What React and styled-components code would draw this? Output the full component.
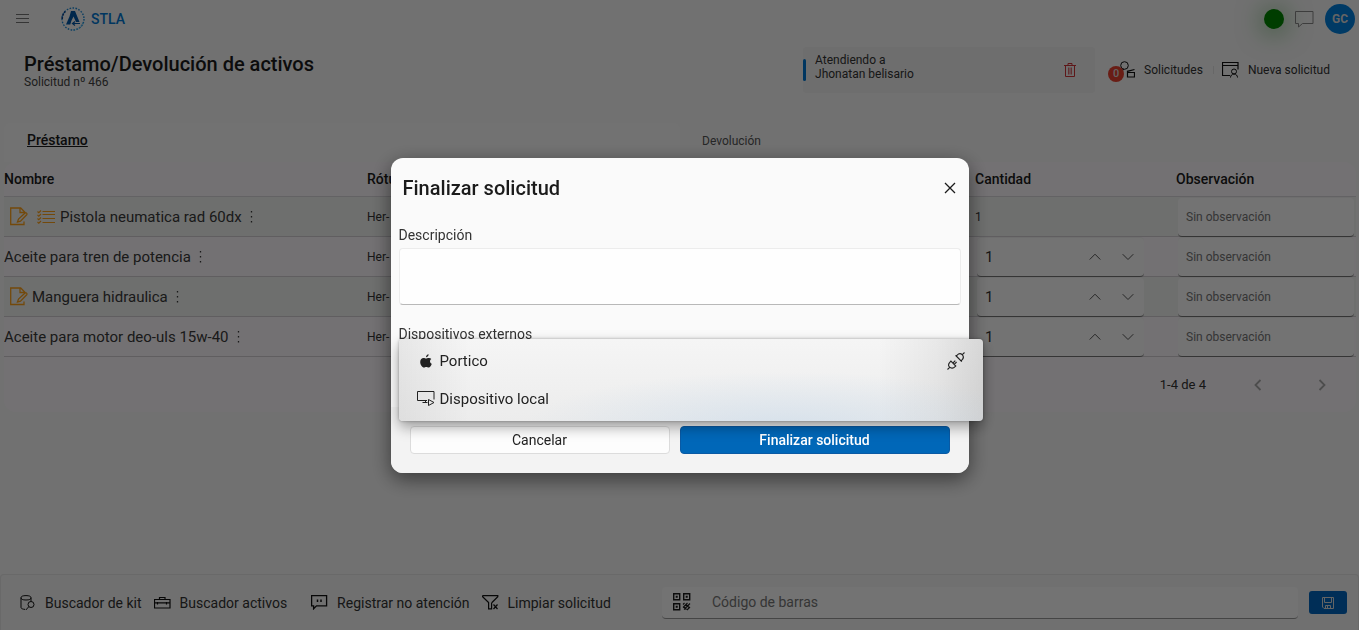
import { useState } from "react";
import styled, { createGlobalStyle } from "styled-components";

const GlobalStyle = createGlobalStyle`
  *, *::before, *::after {
    box-sizing: border-box;
  }
  body {
    margin: 0;
    background: #fafafa;
    color: #1b1b1b;
    font-family: Roboto, "Liberation Sans", sans-serif;
    font-size: 12px;
  }
  button, input, textarea {
    font-family: inherit;
    color: inherit;
  }
  button {
    border: 0;
    padding: 0;
    background: none;
    cursor: pointer;
  }
`;

/* ---------- icons ---------- */

const Svg = styled.svg.attrs({ "aria-hidden": true })`
  display: block;
  flex: none;
  fill: none;
  stroke: currentColor;
  stroke-width: ${(p) => p.$stroke || 1};
`;

const MenuIcon = () => (
  <Svg width="14" height="10" viewBox="0 0 14 10">
    <path d="M0 .5h13M0 4.500h13M0 8.500h13" />
  </Svg>
);

const Logo = () => (
  <Svg width="24" height="26" viewBox="0 0 24 26">
    <circle cx="12" cy="13" r="11" stroke="#1c8ad6" strokeWidth="1.4" strokeDasharray="1.6 1.4" />
    <path d="M12.4 24a11 11 0 0 0 10-8" stroke="#5ac0f5" strokeWidth="1.4" strokeDasharray="1.4 1.4" />
    <path d="M1.2 13a11 11 0 0 1 3-7.5" stroke="#0b3f8a" strokeWidth="1.6" strokeDasharray="2 1.2" />
    <path d="M5 18.500 8.500 10.500 10 5h4L18.500 16h-3.500l-2.500-5.500-2.200 4.500-1 3.500z" fill="#0058a8" stroke="none" />
    <path d="M12 17.500h7M14 15.500l-2.500 2 2.500 2" stroke="#0058a8" strokeWidth="1.200" />
  </Svg>
);

const ChatIcon = () => (
  <Svg width="19" height="17" viewBox="0 0 19 17">
    <path d="M.5 .5h17.500v12H7.500L3.500 16v-3.500h-3z" />
  </Svg>
);

const TrashIcon = () => (
  <Svg width="12" height="15" viewBox="0 0 12 15">
    <path d="M0 2.500h12M4 2.500v-2h4v2M1.500 2.500v11h9v-11" />
    <path d="M4.500 4.500v7M6 4.500v7M7.500 4.500v7" strokeWidth="0.700" />
  </Svg>
);

const RequestsIcon = () => (
  <Svg width="17" height="18" viewBox="0 0 17 18">
    <circle cx="6.500" cy="4.500" r="3.800" />
    <path d="M1 14c0-3 2-5 5-5.500M9.500 11.500h7v4.500h-7zM9.500 11.500v-1.200l7-1.800" strokeWidth="1.200" />
  </Svg>
);

const NewRequestIcon = () => (
  <Svg width="17" height="16" viewBox="0 0 17 16">
    <path d="M8 13.500H.5V.5h15.500v7M.5 3.500h15.500" strokeWidth="1.200" />
    <circle cx="12" cy="9.500" r="2.500" />
    <path d="M8.500 15.500c0-2 1.500-3.500 3.500-3.500s3.500 1.500 3.500 3.500" />
  </Svg>
);

const NoteEditIcon = () => (
  <Svg width="18" height="19" viewBox="0 0 18 19" $stroke="1.300">
    <path d="M14 14.500V17.500H.7V1h10l4 4v1.500M10 1v4.500h4.500" />
    <path d="M7.500 15l1-3 6.500-6c1-.8 2.600.6 1.700 1.700L10.500 14.200z" />
  </Svg>
);

const ChecklistIcon = () => (
  <Svg width="19" height="14" viewBox="0 0 19 14" $stroke="1.100">
    <path d="M5.500 1.500H18M5.500 4.500H18M5.500 8.500H18M5.500 12.500H18" />
    <path d="M.5 1.500l1.300 1.200L4 .5M.5 5l1.300 1.200L4 4M.5 8.500l1.300 1.200L4 7.500M.5 12l1.300 1.200L4 11" />
  </Svg>
);

const MoreIcon = () => (
  <Svg width="3" height="14" viewBox="0 0 3 14">
    <path d="M1.500 1v1.500M1.500 6v1.500M1.500 11v1.500" strokeWidth="1.300" />
  </Svg>
);

const Chevron = ({ dir }) => (
  <Svg width="12" height="8" viewBox="0 0 12 8">
    <path d={dir === "up" ? "M.7 6.500 6 1.200l5.300 5.300" : "M.7 1.200 6 6.500l5.300-5.300"} />
  </Svg>
);

const PageArrow = ({ dir }) => (
  <Svg width="8" height="12" viewBox="0 0 8 12" $stroke="1.800">
    <path d={dir === "left" ? "M6.500 1 1.500 6l5 5" : "M1.500 1l5 5-5 5"} />
  </Svg>
);

const CloseIcon = () => (
  <Svg width="12" height="12" viewBox="0 0 12 12" $stroke="1.300">
    <path d="M1 1l10 10M11 1 1 11" />
  </Svg>
);

const AppleIcon = () => (
  <Svg width="12" height="14" viewBox="0 0 12 14">
    <path
      d="M8.600.3c.1 1.600-1.200 3-2.600 3C5.900 1.800 7.200.5 8.600.3zM11.300 4.900c-1.800 1-1.700 3.900.5 4.800-.5 1.500-1.700 3.900-3.200 3.900-.9 0-1.300-.5-2.300-.5s-1.500.5-2.300.5C2.300 13.600.2 10.800.2 8c0-2.700 1.700-4.100 3.300-4.100 1 0 1.900.7 2.600.7.600 0 1.600-.8 2.900-.7 1 .1 1.800.4 2.300 1z"
      fill="currentColor"
      stroke="none"
    />
  </Svg>
);

const MonitorPlayIcon = () => (
  <Svg width="18" height="17" viewBox="0 0 18 17">
    <path d="M10 10.500H.5v-9h16.500v8M5.500 12.500h5M8.500 10.500v2" />
    <path d="M11.500 9.500v6l5.500-3z" />
  </Svg>
);

const PlugIcon = () => (
  <Svg width="18" height="18" viewBox="0 0 18 18" $stroke="1.100">
    <path d="M.5 17.500l2.200-2.200M3.200 9.800c-1.800 1.800-2 4-.6 5.400s3.700 1.300 5.500-.5l.7-.7-4.900-4.900zM6 11l2.300-2.300M7.200 12.300 9.600 10" />
    <path d="M17.500.5l-2.200 2.200M9.200 4l4.900 4.900.7-.7c1.800-1.800 1.900-4 .5-5.400s-3.600-1.300-5.400.5zM8.500 3.300l.7.700M14.100 8.900l.7.700" />
  </Svg>
);

const DatabaseSearchIcon = () => (
  <Svg width="16" height="16" viewBox="0 0 16 16">
    <ellipse cx="6" cy="2.800" rx="5" ry="2.200" />
    <path d="M1 2.800v9.700c0 1 2 1.800 4 1.900M11 2.800v3.700" />
    <circle cx="11" cy="9.500" r="3" />
    <path d="M8.800 11.700 5.800 15" />
  </Svg>
);

const ToolboxIcon = () => (
  <Svg width="17" height="12" viewBox="0 0 17 12">
    <path d="M.5 2.500h15.500v8.500H.5zM5.500 2.500v-2h5.500v2M.5 5.800h15.500M3.500 5v2.500M12.500 5v2.500" strokeWidth="1.200" />
  </Svg>
);

const MessageIcon = () => (
  <Svg width="17" height="15" viewBox="0 0 17 15">
    <path d="M.6 .6h15v10.300H5.500L2.600 13.800v-2.900h-2z" strokeWidth="1.300" />
    <path d="M6.500 4.500v2.500M10 4.500v2.500" strokeWidth="1.500" />
  </Svg>
);

const FilterClearIcon = () => (
  <Svg width="17" height="15" viewBox="0 0 17 15">
    <path d="M.6.600h15.200v1.200L10 7.500M.6.600v1.200l6 5.700v6.300h3V7.500" strokeWidth="1.200" />
    <path d="M11.500 9.500l4 4.500M15.500 9.500l-4 4.500" strokeWidth="1.200" />
  </Svg>
);

const QrIcon = () => (
  <Svg width="18" height="18" viewBox="0 0 18 18">
    <path d="M.700.700h6v6H.7zM10.700.700h6v6h-6zM.7 10.700h6v6H.7z" strokeWidth="1.400" />
    <path d="M2.700 3.700h2M12.700 3.700h2M2.700 13.700h2" strokeWidth="2" />
    <path d="M10 11.500l1.500-1.500M10 14.500l4.500-4.500M11 16.500l6-6M14 17l3-3M12.500 11l4 4M10.500 13.500l3 3" strokeWidth="1.100" />
  </Svg>
);

const SaveIcon = () => (
  <Svg width="12" height="12" viewBox="0 0 12 12">
    <path d="M.5.500h11v11H2L.5 10zM2.500.500v5h7v-5M3.500 11.500v-3h5v3M5.500 9v2" />
  </Svg>
);

/* ---------- page ---------- */

const Page = styled.div`
  display: flex;
  flex-direction: column;
  min-height: 100vh;
`;

const TopBar = styled.header`
  display: flex;
  align-items: center;
  height: 38px;
  padding: 0 4px 0 16px;
`;

const MenuButton = styled.button`
  color: #777;
`;

const Brand = styled.a`
  display: flex;
  align-items: center;
  gap: 6px;
  margin-left: 31px;
  color: #0078d4;
  font-size: 14px;
  font-weight: 500;
  text-decoration: none;
`;

const TopActions = styled.div`
  display: flex;
  align-items: center;
  gap: 11px;
  margin-left: auto;
  color: #888;
`;

const StatusDot = styled.span`
  width: 20px;
  height: 20px;
  border-radius: 50%;
  background: #008800;
  box-shadow: 0 2px 26px 2px rgba(0, 128, 0, 0.5);
`;

const Avatar = styled.button`
  width: 30px;
  height: 30px;
  border-radius: 50%;
  background: #0080e0;
  color: #ddd;
  font-size: 12px;
  font-weight: 700;
`;

const TitleRow = styled.section`
  display: flex;
  align-items: flex-start;
  padding: 9px 29px 30px 24px;
`;

const PageTitle = styled.h1`
  margin: 4px 0 0;
  font-size: 20px;
  line-height: 26px;
  font-weight: 500;
`;

const Subtitle = styled.p`
  margin: 0;
  font-size: 12px;
  line-height: 10px;
  color: #444;
`;

const TitleActions = styled.div`
  display: flex;
  align-items: center;
  margin-left: auto;
`;

const AttendingCard = styled.div`
  display: flex;
  align-items: center;
  width: 292px;
  height: 46px;
  margin-right: 13px;
  padding-right: 19px;
  border-radius: 4px;
  background: #f3f3f3;
  line-height: 14px;
  color: #333;

  &::before {
    content: "";
    width: 3px;
    height: 22px;
    margin-right: 9px;
    border-radius: 2px;
    background: #0078d4;
  }
`;

const AttendingName = styled.div`
  flex: 1;
  padding-bottom: 6px;
`;

const DeleteButton = styled.button`
  color: #d13438;
`;

const LinkButton = styled.button`
  display: flex;
  align-items: center;
  gap: 9px;
  font-size: 12px;
  color: #333;

  svg {
    color: #111;
  }
`;

const RequestsIconBox = styled.span`
  position: relative;
  padding-left: 10px;
`;

const Badge = styled.span`
  position: absolute;
  left: 0;
  bottom: -3px;
  width: 16px;
  height: 16px;
  border-radius: 50%;
  background: #e8412f;
  color: #ddd;
  font-size: 11px;
  font-weight: 500;
  line-height: 16px;
  text-align: center;
`;

const Separator = styled.span`
  width: 1px;
  height: 8px;
  margin: 0 8px 0 10px;
  background: #e4e4e4;
`;

const Tabs = styled.div`
  display: grid;
  grid-template-columns: 1fr 1fr;
  margin: 0 3px 0 4px;
`;

const Tab = styled.button`
  height: 39px;
  padding: ${(p) => (p.$active ? "0 23px 6px" : "0 22px 3px")};
  border-radius: 6px 6px 0 0;
  background: ${(p) => (p.$active ? "#fcfcfc" : "transparent")};
  color: ${(p) => (p.$active ? "#1b1b1b" : "#555")};
  font-size: ${(p) => (p.$active ? "14px" : "12px")};
  font-weight: ${(p) => (p.$active ? 500 : 400)};
  text-align: left;
  text-decoration: ${(p) => (p.$active ? "underline" : "none")};
`;

const TablePanel = styled.section`
  margin: 0 3px 0 4px;
  border-radius: 12px;
  background: #fffbff;
  overflow: hidden;
`;

const Table = styled.table`
  width: 100%;
  table-layout: fixed;
  border-collapse: separate;
  border-spacing: 0;
`;

const Th = styled.th`
  width: ${(p) => p.$width || "auto"};
  height: 35px;
  padding: 0;
  border-bottom: 1px solid #dcd9de;
  font-size: 14px;
  font-weight: 500;
  text-align: left;
`;

const Tr = styled.tr`
  background: ${(p) => (p.$shaded ? "#f3f5f3" : "transparent")};
`;

const Td = styled.td`
  height: 40px;
  padding: 0;
  border-bottom: 1px solid #d4d1d6;
  font-size: 12px;
  color: #333;
`;

const NameCell = styled.div`
  display: flex;
  align-items: center;
  gap: 4px;
  padding-left: ${(p) => (p.$icons ? "6px" : "0")};
  font-size: 15px;
  color: #3a3a3a;
`;

const Flag = styled.span`
  color: #ffa21a;

  & + & {
    margin-left: 5px;
  }
`;

const MoreButton = styled.button`
  margin-left: 4px;
`;

const Field = styled.div`
  display: flex;
  align-items: center;
  height: 40px;
  margin: ${(p) => (p.$wide ? "0 2px -1px 2px" : "0 32px -1px 2px")};
  border: 1px solid #f4f4f4;
  border-width: 1px 0;
  border-bottom-color: #777;
  border-radius: 4px;
  background: #fefefe;
`;

const FieldInput = styled.input`
  flex: 1;
  width: 0;
  padding: 0 8px;
  border: 0;
  outline: 0;
  background: none;
  font-size: ${(p) => p.$size || "12px"};

  &::placeholder {
    color: #777;
    opacity: 1;
  }
`;

const SpinButton = styled.button`
  display: flex;
  justify-content: center;
  width: 33px;
  color: #555;
`;

const Pager = styled.nav`
  display: flex;
  align-items: center;
  justify-content: flex-end;
  height: 55px;
  padding-right: 30px;
  font-size: 13px;
  color: #333;
`;

const PageButton = styled.button`
  margin-left: ${(p) => p.$gap};
  color: #aaa;
`;

const BottomBar = styled.footer`
  display: flex;
  align-items: center;
  gap: 11px;
  height: 56px;
  margin-top: auto;
  padding: 0 11px 0 19px;
  border: 1px solid #e8e8e8;
  border-width: 1px 1px 0;
  border-radius: 4px 4px 0 0;
  background: #f8f8f8;
`;

const ToolGroups = styled.div`
  display: flex;
  gap: 24px;
  width: 631px;
`;

const ToolGroup = styled.div`
  display: flex;
  gap: 12px;
`;

const ToolButton = styled(LinkButton)`
  font-size: 14px;
`;

const BarcodeBox = styled.label`
  display: flex;
  flex: 1;
  align-items: center;
  gap: 13px;
  height: 32px;
  padding-left: 11px;
  border-bottom: 1px solid #999;
  border-radius: 4px;
  background: #fefefe;
`;

const SaveButton = styled.button`
  display: flex;
  align-items: center;
  justify-content: center;
  width: 38px;
  height: 23px;
  border-radius: 3px;
  background: #0067c0;
  color: #ddd;
`;

/* ---------- dialog ---------- */

const Overlay = styled.div`
  position: fixed;
  inset: 0;
  display: flex;
  align-items: center;
  justify-content: center;
  background: rgba(0, 0, 0, 0.55);
`;

const Dialog = styled.div`
  width: 578px;
  max-width: 100%;
  border-radius: 12px;
  background: #fafafa;
  box-shadow: 0 6px 20px rgba(0, 0, 0, 0.5);
`;

const DialogHeader = styled.div`
  display: flex;
  align-items: center;
  justify-content: space-between;
  height: 60px;
  padding: 0 13px 0 12px;
`;

const DialogTitle = styled.h2`
  margin: 0;
  font-size: 20px;
  font-weight: 500;
`;

const DialogBody = styled.div`
  padding: 8px 8px 28px;
`;

const Label = styled.label`
  display: block;
  margin-bottom: 4px;
  font-size: 14px;
  line-height: 18px;
  color: #333;
`;

const TextArea = styled.textarea`
  display: block;
  width: 100%;
  height: 57px;
  margin-bottom: 20px;
  border: 1px solid #ececec;
  border-bottom: 1px solid #b8b8b8;
  border-radius: 4px;
  background: #fefefe;
  outline: 0;
  resize: none;
`;

const DeviceField = styled.div`
  position: relative;
`;

const DeviceTrigger = styled.button`
  display: block;
  width: 100%;
  height: 32px;
  border: 1px solid #ddd;
  border-radius: 4px;
`;

const DeviceMenu = styled.div`
  position: absolute;
  top: 14px;
  left: 0;
  right: -22px;
  padding: 3px 18px;
  border-radius: 4px;
  background:
    radial-gradient(ellipse 260px 56px at 66% 108%, rgba(200, 218, 235, 0.6), rgba(200, 218, 235, 0)),
    linear-gradient(90deg, rgba(0, 0, 0, 0.06), transparent 12%, transparent 82%, rgba(0, 0, 0, 0.05) 92%, rgba(0, 0, 0, 0.12)),
    linear-gradient(#f5f5f5, #ececec);
  box-shadow: 0 6px 14px rgba(0, 0, 0, 0.36), 0 0 3px rgba(0, 0, 0, 0.3);
`;

const DeviceOption = styled.button`
  display: flex;
  align-items: center;
  gap: 5px;
  width: 100%;
  height: 38px;
  font-size: 15px;
  color: #222;

  & > svg:last-child {
    margin-left: auto;
  }
`;

const OptionIcon = styled.span`
  display: flex;
  justify-content: center;
  width: 18px;
`;

const DialogActions = styled.div`
  display: grid;
  grid-template-columns: 26fr 27fr;
  gap: 10px;
  padding: 19px;
  border-radius: 0 0 12px 12px;
  background: #f3f3f3;
`;

const ActionButton = styled.button`
  height: 28px;
  border: 1px solid ${(p) => (p.$primary ? "#0a5aa4" : "#dcdcdc")};
  border-radius: 4px;
  background: ${(p) => (p.$primary ? "#0067b8" : "#fdfdfd")};
  color: ${(p) => (p.$primary ? "#fff" : "#222")};
  font-size: 14px;
  font-weight: ${(p) => (p.$primary ? 500 : 400)};
`;

const assets = [
  { name: "Pistola neumatica rad 60dx", label: "Her-", note: true, list: true, fixed: true },
  { name: "Aceite para tren de potencia", label: "Her-" },
  { name: "Manguera hidraulica", label: "Her-", note: true },
  { name: "Aceite para motor deo-uls 15w-40", label: "Her-" },
];

function AssetRow({ asset, shaded }) {
  const [quantity, setQuantity] = useState(1);

  return (
    <Tr $shaded={shaded}>
      <Td>
        <NameCell $icons={asset.note}>
          {asset.note && <Flag><NoteEditIcon /></Flag>}
          {asset.list && <Flag><ChecklistIcon /></Flag>}
          {asset.name}
          <MoreButton aria-label="Más opciones"><MoreIcon /></MoreButton>
        </NameCell>
      </Td>
      <Td>{asset.label}</Td>
      <Td>
        {asset.fixed ? (
          quantity
        ) : (
          <Field>
            <FieldInput
              $size="15px"
              aria-label="Cantidad"
              value={quantity}
              onChange={(e) => setQuantity(Number(e.target.value) || 0)}
            />
            <SpinButton aria-label="Aumentar" onClick={() => setQuantity(quantity + 1)}>
              <Chevron dir="up" />
            </SpinButton>
            <SpinButton aria-label="Disminuir" onClick={() => setQuantity(Math.max(0, quantity - 1))}>
              <Chevron dir="down" />
            </SpinButton>
          </Field>
        )}
      </Td>
      <Td>
        <Field $wide>
          <FieldInput aria-label="Observación" placeholder="Sin observación" />
        </Field>
      </Td>
    </Tr>
  );
}

function FinishDialog() {
  return (
    <Overlay>
      <Dialog role="dialog" aria-labelledby="finish-title">
        <DialogHeader>
          <DialogTitle id="finish-title">Finalizar solicitud</DialogTitle>
          <button aria-label="Cerrar"><CloseIcon /></button>
        </DialogHeader>
        <DialogBody>
          <Label htmlFor="description">Descripción</Label>
          <TextArea id="description" />
          <DeviceField>
            <Label htmlFor="device">Dispositivos externos</Label>
            <DeviceTrigger id="device" aria-haspopup="listbox" />
            <DeviceMenu role="listbox">
              <DeviceOption role="option">
                <OptionIcon><AppleIcon /></OptionIcon>
                Portico
                <PlugIcon />
              </DeviceOption>
              <DeviceOption role="option">
                <OptionIcon><MonitorPlayIcon /></OptionIcon>
                Dispositivo local
              </DeviceOption>
            </DeviceMenu>
          </DeviceField>
        </DialogBody>
        <DialogActions>
          <ActionButton>Cancelar</ActionButton>
          <ActionButton $primary>Finalizar solicitud</ActionButton>
        </DialogActions>
      </Dialog>
    </Overlay>
  );
}

export default function App() {
  return (
    <>
      <GlobalStyle />
      <Page>
        <TopBar>
          <MenuButton aria-label="Menú"><MenuIcon /></MenuButton>
          <Brand href="#"><Logo />STLA</Brand>
          <TopActions>
            <StatusDot />
            <ChatIcon />
            <Avatar>GC</Avatar>
          </TopActions>
        </TopBar>

        <TitleRow>
          <div>
            <PageTitle>Préstamo/Devolución de activos</PageTitle>
            <Subtitle>Solicitud nº 466</Subtitle>
          </div>
          <TitleActions>
            <AttendingCard>
              <AttendingName>
                Atendiendo a
                <br />
                Jhonatan belisario
              </AttendingName>
              <DeleteButton aria-label="Quitar"><TrashIcon /></DeleteButton>
            </AttendingCard>
            <LinkButton>
              <RequestsIconBox>
                <RequestsIcon />
                <Badge>0</Badge>
              </RequestsIconBox>
              Solicitudes
            </LinkButton>
            <Separator />
            <LinkButton>
              <NewRequestIcon />
              Nueva solicitud
            </LinkButton>
          </TitleActions>
        </TitleRow>

        <Tabs role="tablist">
          <Tab role="tab" $active>Préstamo</Tab>
          <Tab role="tab">Devolución</Tab>
        </Tabs>

        <TablePanel>
          <Table>
            <thead>
              <tr>
                <Th $width="363px">Nombre</Th>
                <Th>Rótulo</Th>
                <Th $width="201px">Cantidad</Th>
                <Th $width="180px">Observación</Th>
              </tr>
            </thead>
            <tbody>
              {assets.map((asset, i) => (
                <AssetRow key={asset.name} asset={asset} shaded={i % 2 === 0} />
              ))}
            </tbody>
          </Table>
          <Pager aria-label="Paginación">
            1-4 de 4
            <PageButton $gap="48px" aria-label="Anterior"><PageArrow dir="left" /></PageButton>
            <PageButton $gap="56px" aria-label="Siguiente"><PageArrow dir="right" /></PageButton>
          </Pager>
        </TablePanel>

        <BottomBar>
          <ToolGroups>
            <ToolGroup>
              <ToolButton><DatabaseSearchIcon />Buscador de kit</ToolButton>
              <ToolButton><ToolboxIcon />Buscador activos</ToolButton>
            </ToolGroup>
            <ToolGroup>
              <ToolButton><MessageIcon />Registrar no atención</ToolButton>
              <ToolButton><FilterClearIcon />Limpiar solicitud</ToolButton>
            </ToolGroup>
          </ToolGroups>
          <BarcodeBox>
            <QrIcon />
            <FieldInput $size="14px" aria-label="Código de barras" placeholder="Código de barras" />
          </BarcodeBox>
          <SaveButton aria-label="Guardar"><SaveIcon /></SaveButton>
        </BottomBar>
      </Page>
      <FinishDialog />
    </>
  );
}
